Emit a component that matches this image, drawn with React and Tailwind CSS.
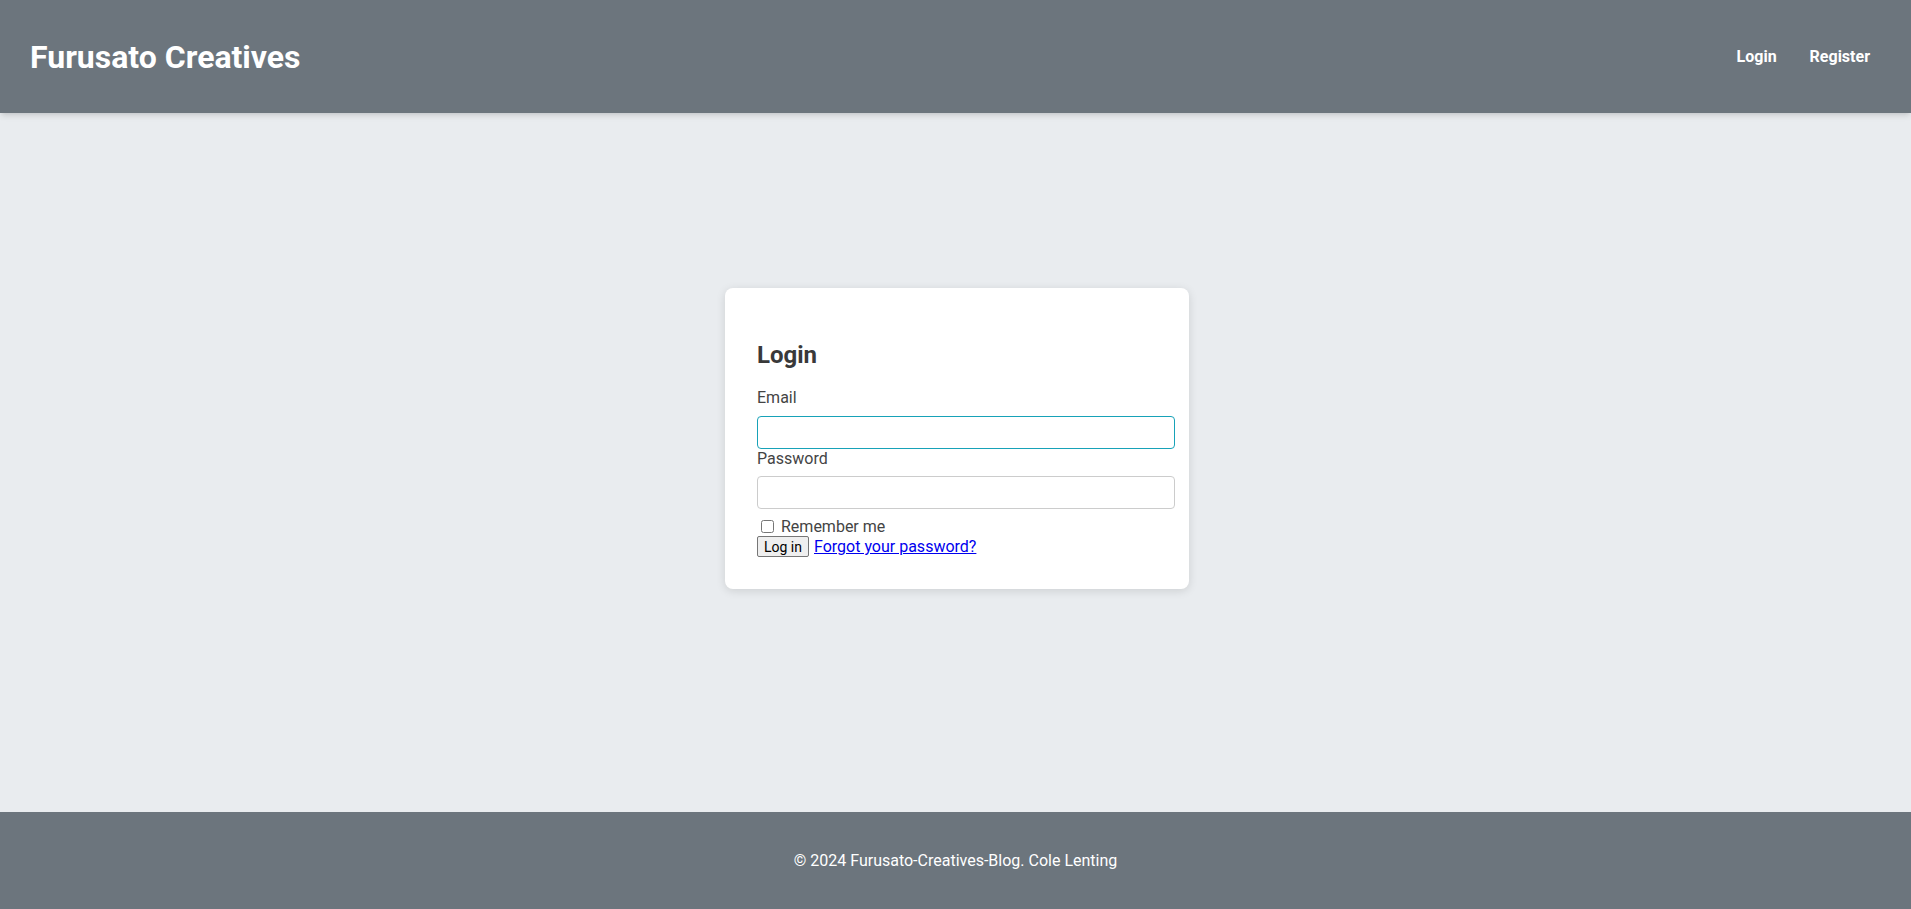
export default function App() {
  return (
    <div className="min-h-screen flex flex-col bg-[#e9ecef]" style={{ fontFamily: "Roboto, 'Liberation Sans', sans-serif" }}>
      <header className="h-[113px] bg-[#6c757d] flex items-center justify-between pl-[30px] pr-[25px] shadow-md relative z-10">
        <h1 className="text-[32px] font-bold text-white leading-none">Furusato Creatives</h1>
        <nav className="flex items-center text-white font-bold text-[16px]">
          <a className="pl-4 pr-[17px]">Login</a>
          <a className="px-4">Register</a>
        </nav>
      </header>
      <main className="flex-1 pt-[175px] flex justify-center pl-[3px]">
        <div className="w-[464px] h-fit bg-white rounded-lg shadow-[0_2px_10px_rgba(0,0,0,0.12)] p-8 text-[16px] text-[#444]">
          <h2 className="text-[24px] font-bold text-[#393939] mt-[21px] mb-[19px] leading-[28px]">Login</h2>
          <label className="block mb-[9px] leading-[19px]">Email</label>
          <input type="email" className="block w-[418px] h-[33px] border border-[#17a2b8] rounded-[4px] px-2 outline-none" />
          <label className="block mb-[8px] leading-[19px]">Password</label>
          <input type="password" className="block w-[418px] h-[33px] border border-[#cccccc] rounded-[4px] px-2 outline-none" />
          <div className="mt-[8px] flex items-center leading-[19px]">
            <input type="checkbox" className="ml-1 mr-[3px] w-[13px] h-[13px]" />
            <span className="ml-[4px]">Remember me</span>
          </div>
          <div className="flex items-center leading-[19px]">
            <button className="h-[21px] w-[52px] bg-[#efefef] border border-[#767676] rounded-[2px] text-[14px] text-black leading-none">Log in</button>
            <a href="#" className="ml-[5px] text-[#0000ee] underline">Forgot your password?</a>
          </div>
        </div>
      </main>
      <footer className="h-[97px] bg-[#6c757d] flex items-center justify-center text-white text-[16px] pt-[1px]">
        © 2024 Furusato-Creatives-Blog. Cole Lenting
      </footer>
    </div>
  );
}
